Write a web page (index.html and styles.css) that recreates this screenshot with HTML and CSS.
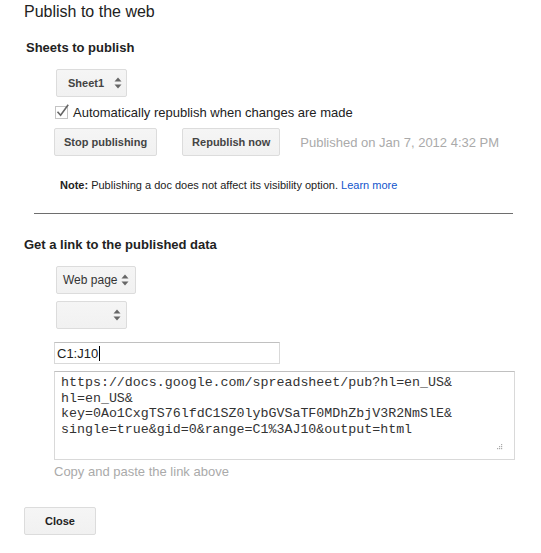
FILE: index.html
```html
<!DOCTYPE html>
<html lang="en">
<head>
    <meta charset="UTF-8">
    <meta name="viewport" content="width=device-width, initial-scale=1.0">
    <title>Publish to the web</title>
    <link rel="stylesheet" href="styles.css">
</head>
<body>
    <div class="dialog">
        <h1 class="title">Publish to the web</h1>

        <h2 class="section-title section-title--first">Sheets to publish</h2>

        <div class="select select--sheet">
            <span class="select-label">Sheet1</span>
            <svg class="select-arrows" width="8" height="12" viewBox="0 0 8 12">
                <path d="M4 0.5 L7.5 4.5 L0.5 4.5 Z" fill="#666"/>
                <path d="M0.5 7.5 L7.5 7.5 L4 11.5 Z" fill="#666"/>
            </svg>
        </div>

        <label class="auto-row">
            <svg class="checkbox" width="16" height="16" viewBox="0 0 16 16">
                <rect x="0.5" y="3.5" width="12" height="12" fill="#fff" stroke="#c4c4c4"/>
                <path d="M2.5 8.8 L5.6 12.2 L13.2 1.8" fill="none" stroke="#666" stroke-width="1.6"/>
            </svg>
            <span>Automatically republish when changes are made</span>
        </label>

        <div class="actions">
            <button class="btn">Stop publishing</button>
            <button class="btn">Republish now</button>
            <span class="published-on">Published on Jan 7, 2012 4:32 PM</span>
        </div>

        <p class="note"><strong>Note:</strong> Publishing a doc does not affect its visibility option. <a href="#">Learn more</a></p>

        <div class="divider"></div>

        <h2 class="section-title">Get a link to the published data</h2>

        <div class="select select--format">
            <span class="select-label select-label--plain">Web page</span>
            <svg class="select-arrows" width="8" height="12" viewBox="0 0 8 12">
                <path d="M4 0.5 L7.5 4.5 L0.5 4.5 Z" fill="#666"/>
                <path d="M0.5 7.5 L7.5 7.5 L4 11.5 Z" fill="#666"/>
            </svg>
        </div>

        <div class="select select--empty">
            <span class="select-label"></span>
            <svg class="select-arrows" width="8" height="12" viewBox="0 0 8 12">
                <path d="M4 0.5 L7.5 4.5 L0.5 4.5 Z" fill="#666"/>
                <path d="M0.5 7.5 L7.5 7.5 L4 11.5 Z" fill="#666"/>
            </svg>
        </div>

        <div class="range-input">C1:J10<span class="caret"></span></div>

        <div class="link-box">
            <div class="link-text">https://docs.google.com/spreadsheet/pub?hl=en_US&amp;
hl=en_US&amp;
key=0Ao1CxgTS76lfdC1SZ0lybGVSaTF0MDhZbjV3R2NmSlE&amp;
single=true&amp;gid=0&amp;range=C1%3AJ10&amp;output=html</div>
            <svg class="grip" width="7" height="7" viewBox="0 0 7 7">
                <rect x="5" y="0" width="1.2" height="1.2" fill="#aaa"/>
                <rect x="3" y="2" width="1.2" height="1.2" fill="#aaa"/>
                <rect x="5" y="2" width="1.2" height="1.2" fill="#aaa"/>
                <rect x="1" y="4" width="1.2" height="1.2" fill="#aaa"/>
                <rect x="3" y="4" width="1.2" height="1.2" fill="#aaa"/>
                <rect x="5" y="4" width="1.2" height="1.2" fill="#aaa"/>
            </svg>
        </div>

        <p class="hint">Copy and paste the link above</p>

        <button class="btn btn--close">Close</button>
    </div>
</body>
</html>
```

FILE: styles.css
```css
body {
    margin: 0;
    padding: 0;
    background-color: #fff;
    color: #222;
    font-family: 'Liberation Sans', Arial, sans-serif;
}

.dialog {
    padding: 2px 24px 0 24px;
}

.title {
    margin: 0;
    font-size: 16px;
    font-weight: normal;
    line-height: 20px;
}

.section-title {
    margin: 23px 0 0 0;
    font-size: 13px;
    font-weight: bold;
    line-height: 16px;
}

.section-title--first {
    margin: 18px 0 0 2px;
}

/* fake selects */
.select {
    display: flex;
    align-items: center;
    justify-content: space-between;
    box-sizing: border-box;
    height: 28px;
    margin-left: 32px;
    border: 1px solid #dcdcdc;
    border-radius: 2px;
    background: linear-gradient(#f5f5f5, #f1f1f1);
    color: #444;
}

.select--sheet {
    width: 71px;
    margin-top: 13px;
    padding: 0 4px 0 11px;
}

.select--format {
    width: 80px;
    margin-top: 13px;
    padding: 0 6px 0 6px;
}

.select--empty {
    width: 71px;
    margin-top: 7px;
    padding: 0 5px 0 11px;
}

.select-label {
    font-size: 11px;
    font-weight: bold;
}

.select-label--plain {
    font-size: 12px;
    font-weight: normal;
    color: #333;
}

.select-arrows {
    display: block;
}

.auto-row {
    display: flex;
    align-items: center;
    gap: 2px;
    height: 16px;
    margin: 7px 0 0 31px;
    font-size: 13px;
}

.checkbox {
    display: block;
    margin-top: -3px;
}

.actions {
    display: flex;
    align-items: center;
    margin: 8px 0 0 30px;
}

.btn {
    box-sizing: border-box;
    height: 28px;
    padding: 0 9px;
    margin-right: 25px;
    border: 1px solid #dcdcdc;
    border-radius: 2px;
    background: linear-gradient(#f5f5f5, #f1f1f1);
    color: #444;
    font-family: 'Liberation Sans', Arial, sans-serif;
    font-size: 11px;
    font-weight: bold;
}

.actions .btn:last-of-type {
    margin-right: 20px;
}

.published-on {
    font-size: 13px;
    color: #aaa;
}

.note {
    margin: 22px 0 0 36px;
    font-size: 11px;
    line-height: 14px;
}

.note a {
    color: #15c;
    text-decoration: none;
}

.divider {
    width: 479px;
    margin: 21px 0 0 10px;
    border-top: 1px solid #6e6e6e;
}

.range-input {
    display: flex;
    align-items: center;
    box-sizing: border-box;
    width: 226px;
    height: 22px;
    margin: 13px 0 0 30px;
    padding-left: 2px;
    border: 1px solid #d9d9d9;
    border-top-color: #c0c0c0;
    font-size: 13px;
}

.caret {
    display: inline-block;
    width: 1px;
    height: 15px;
    margin-left: 1px;
    background-color: #000;
}

.link-box {
    position: relative;
    box-sizing: border-box;
    width: 461px;
    height: 89px;
    margin: 7px 0 0 30px;
    padding: 3px 6px;
    border: 1px solid #d9d9d9;
    border-top-color: #c0c0c0;
}

.link-text {
    white-space: pre;
    font-family: 'Liberation Mono', 'Courier New', monospace;
    font-size: 13.3px;
    line-height: 15.7px;
    color: #333;
}

.grip {
    position: absolute;
    right: 11px;
    bottom: 8px;
}

.hint {
    margin: 4px 0 0 30px;
    font-size: 13px;
    line-height: 16px;
    color: #aaa;
}

.btn--close {
    display: block;
    width: 72px;
    margin-top: 27px;
    color: #222;
}
```
